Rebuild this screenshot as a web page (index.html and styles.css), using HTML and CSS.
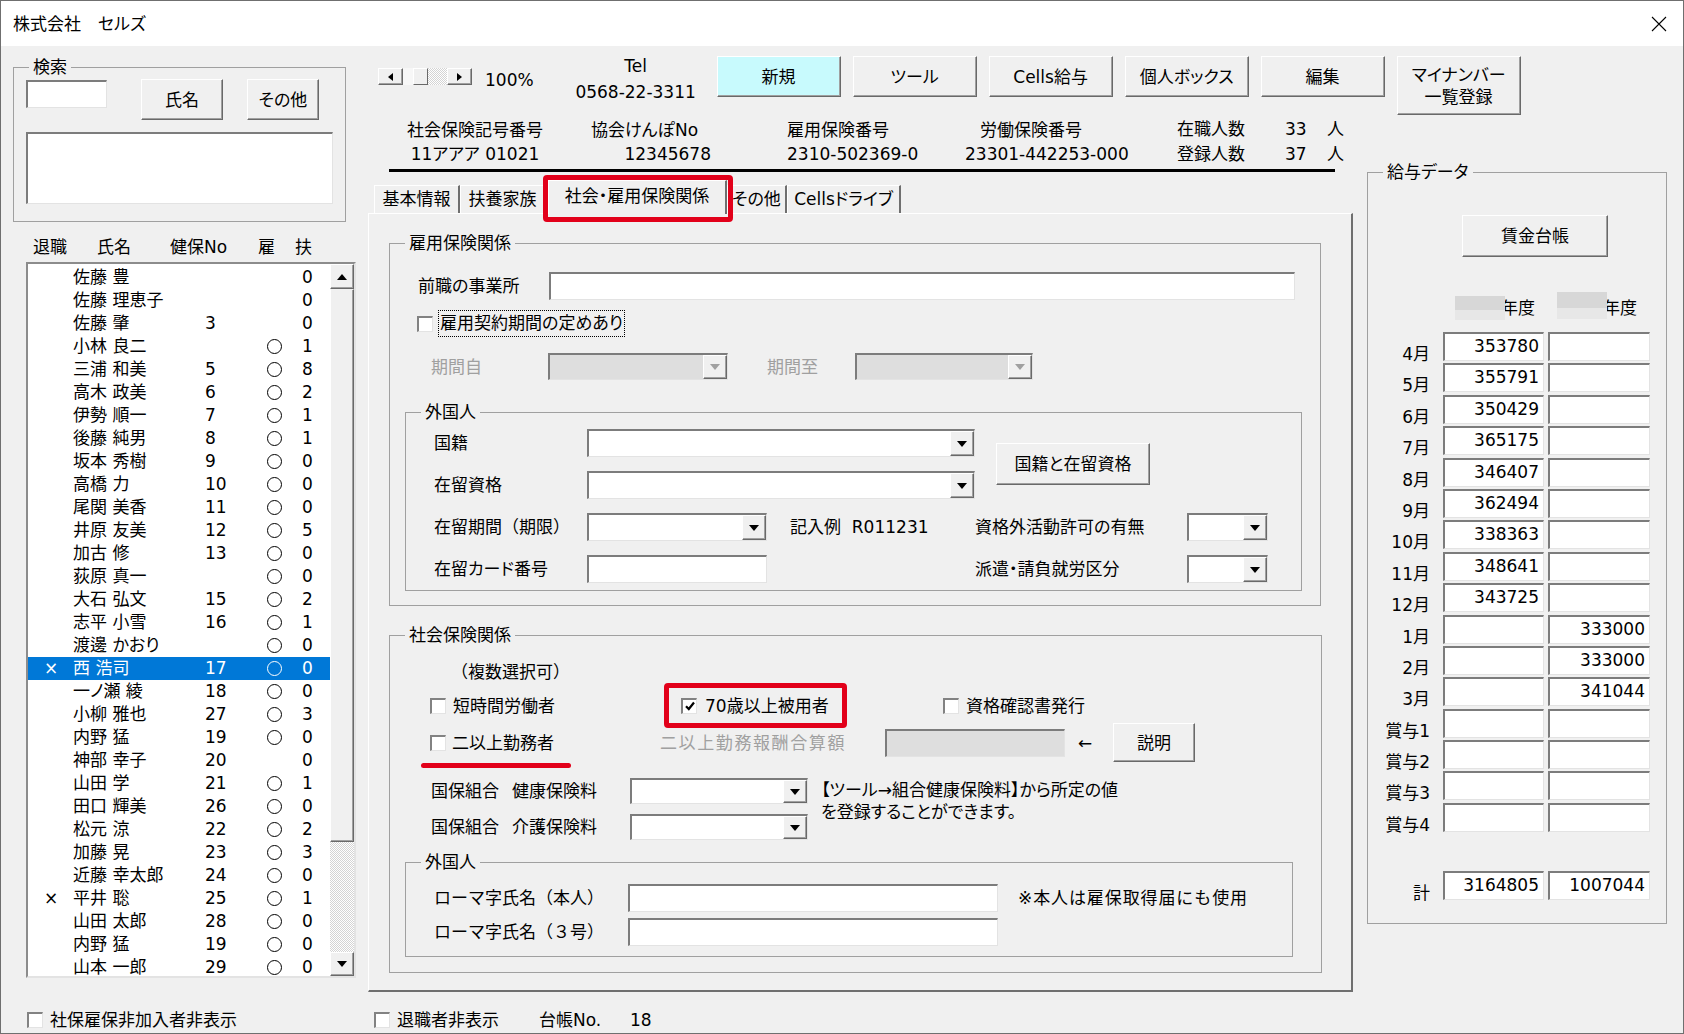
FILE: index.html
```html
<!DOCTYPE html>
<html lang="ja">
<head>
    <meta charset="UTF-8">
    <meta name="viewport" content="width=device-width, initial-scale=1.0">
    <title>株式会社　セルズ</title>
    <link rel="stylesheet" href="styles.css">
</head>
<body>
<div class="window">
    <div class="titlebar">
        <span class="title">株式会社　セルズ</span>
        <svg class="close" width="16" height="16" viewBox="0 0 16 16"><path d="M1 1L15 15M15 1L1 15" stroke="#000" stroke-width="1.1" fill="none"/></svg>
    </div>

    <div class="main">
        <!-- Left: search + employee list -->
        <div class="left">
            <div class="group search">
                <span class="legend">検索</span>
                <div class="search-row">
                    <div class="field search-input"></div>
                    <button class="btn btn-name">氏名</button>
                    <button class="btn btn-other">その他</button>
                </div>
                <div class="field search-list"></div>
            </div>

            <div class="list-head">
                <span class="h-ret">退職</span><span class="h-name">氏名</span><span class="h-no">健保No</span><span class="h-emp">雇</span><span>扶</span>
            </div>

            <div class="listbox">
                <div class="rows">
                    <div class="row"><span class="c-ret"></span><span>佐藤 豊</span><span></span><span class="c-emp"></span><span>0</span></div>
                    <div class="row"><span class="c-ret"></span><span>佐藤 理恵子</span><span></span><span class="c-emp"></span><span>0</span></div>
                    <div class="row"><span class="c-ret"></span><span>佐藤 肇</span><span>3</span><span class="c-emp"></span><span>0</span></div>
                    <div class="row"><span class="c-ret"></span><span>小林 良二</span><span></span><span class="c-emp"><i class="maru"></i></span><span>1</span></div>
                    <div class="row"><span class="c-ret"></span><span>三浦 和美</span><span>5</span><span class="c-emp"><i class="maru"></i></span><span>8</span></div>
                    <div class="row"><span class="c-ret"></span><span>高木 政美</span><span>6</span><span class="c-emp"><i class="maru"></i></span><span>2</span></div>
                    <div class="row"><span class="c-ret"></span><span>伊勢 順一</span><span>7</span><span class="c-emp"><i class="maru"></i></span><span>1</span></div>
                    <div class="row"><span class="c-ret"></span><span>後藤 純男</span><span>8</span><span class="c-emp"><i class="maru"></i></span><span>1</span></div>
                    <div class="row"><span class="c-ret"></span><span>坂本 秀樹</span><span>9</span><span class="c-emp"><i class="maru"></i></span><span>0</span></div>
                    <div class="row"><span class="c-ret"></span><span>高橋 力</span><span>10</span><span class="c-emp"><i class="maru"></i></span><span>0</span></div>
                    <div class="row"><span class="c-ret"></span><span>尾関 美香</span><span>11</span><span class="c-emp"><i class="maru"></i></span><span>0</span></div>
                    <div class="row"><span class="c-ret"></span><span>井原 友美</span><span>12</span><span class="c-emp"><i class="maru"></i></span><span>5</span></div>
                    <div class="row"><span class="c-ret"></span><span>加古 修</span><span>13</span><span class="c-emp"><i class="maru"></i></span><span>0</span></div>
                    <div class="row"><span class="c-ret"></span><span>荻原 真一</span><span></span><span class="c-emp"><i class="maru"></i></span><span>0</span></div>
                    <div class="row"><span class="c-ret"></span><span>大石 弘文</span><span>15</span><span class="c-emp"><i class="maru"></i></span><span>2</span></div>
                    <div class="row"><span class="c-ret"></span><span>志平 小雪</span><span>16</span><span class="c-emp"><i class="maru"></i></span><span>1</span></div>
                    <div class="row"><span class="c-ret"></span><span>渡邊 かおり</span><span></span><span class="c-emp"><i class="maru"></i></span><span>0</span></div>
                    <div class="row sel"><span class="c-ret">×</span><span>西 浩司</span><span>17</span><span class="c-emp"><i class="maru"></i></span><span>0</span></div>
                    <div class="row"><span class="c-ret"></span><span>一ノ瀬 綾</span><span>18</span><span class="c-emp"><i class="maru"></i></span><span>0</span></div>
                    <div class="row"><span class="c-ret"></span><span>小柳 雅也</span><span>27</span><span class="c-emp"><i class="maru"></i></span><span>3</span></div>
                    <div class="row"><span class="c-ret"></span><span>内野 猛</span><span>19</span><span class="c-emp"><i class="maru"></i></span><span>0</span></div>
                    <div class="row"><span class="c-ret"></span><span>神部 幸子</span><span>20</span><span class="c-emp"></span><span>0</span></div>
                    <div class="row"><span class="c-ret"></span><span>山田 学</span><span>21</span><span class="c-emp"><i class="maru"></i></span><span>1</span></div>
                    <div class="row"><span class="c-ret"></span><span>田口 輝美</span><span>26</span><span class="c-emp"><i class="maru"></i></span><span>0</span></div>
                    <div class="row"><span class="c-ret"></span><span>松元 涼</span><span>22</span><span class="c-emp"><i class="maru"></i></span><span>2</span></div>
                    <div class="row"><span class="c-ret"></span><span>加藤 晃</span><span>23</span><span class="c-emp"><i class="maru"></i></span><span>3</span></div>
                    <div class="row"><span class="c-ret"></span><span>近藤 幸太郎</span><span>24</span><span class="c-emp"><i class="maru"></i></span><span>0</span></div>
                    <div class="row"><span class="c-ret">×</span><span>平井 聡</span><span>25</span><span class="c-emp"><i class="maru"></i></span><span>1</span></div>
                    <div class="row"><span class="c-ret"></span><span>山田 太郎</span><span>28</span><span class="c-emp"><i class="maru"></i></span><span>0</span></div>
                    <div class="row"><span class="c-ret"></span><span>内野 猛</span><span>19</span><span class="c-emp"><i class="maru"></i></span><span>0</span></div>
                    <div class="row"><span class="c-ret"></span><span>山本 一郎</span><span>29</span><span class="c-emp"><i class="maru"></i></span><span>0</span></div>
                </div>
                <div class="vscroll">
                    <span class="sbtn sb-up"></span>
                    <span class="sb-thumb"></span>
                    <span class="dither sb-track"></span>
                    <span class="sbtn sb-down"></span>
                </div>
            </div>
        </div>

        <!-- Right: toolbar, tabs, salary data -->
        <div class="right">
            <div class="toolbar">
                <div class="hscroll">
                    <span class="sbtn sb-left"></span>
                    <span class="hs-gap"></span>
                    <span class="hs-thumb"></span>
                    <span class="dither hs-track"></span>
                    <span class="sbtn sb-right"></span>
                </div>
                <span class="zoom">100%</span>
                <div class="tel"><div>Tel</div><div>0568-22-3311</div></div>
                <button class="btn tbtn new">新規</button>
                <button class="btn tbtn">ツール</button>
                <button class="btn tbtn">Cells給与</button>
                <button class="btn tbtn">個人ボックス</button>
                <button class="btn tbtn">編集</button>
                <button class="btn tbtn tall">マイナンバー<br>一覧登録</button>
            </div>

            <div class="work">
                <div class="center">
                    <div class="info">
                        <div class="ic ic-a"><div>社会保険記号番号</div><div class="val">11アアア 01021</div></div>
                        <div class="ic ic-b"><div>協会けんぽNo</div><div class="val ar">12345678</div></div>
                        <div class="ic ic-c"><div>雇用保険番号</div><div class="val">2310-502369-0</div></div>
                        <div class="ic ic-d"><div class="pl">労働保険番号</div><div class="val">23301-442253-000</div></div>
                        <div class="count">
                            <span>在職人数</span><span>33</span><span class="nin">人</span>
                            <span>登録人数</span><span>37</span><span class="nin">人</span>
                        </div>
                    </div>
                    <div class="rule"></div>

                    <div class="tabs">
                        <div class="tab t1">基本情報</div>
                        <div class="tab t2">扶養家族</div>
                        <div class="tab sel">社会・雇用保険関係</div>
                        <div class="tab t4">その他</div>
                        <div class="tab t5">Cellsドライブ</div>
                    </div>

                    <div class="panel">
                        <!-- 雇用保険関係 -->
                        <div class="group emp">
                            <span class="legend">雇用保険関係</span>
                            <div class="row r1">
                                <span class="lbl-prev">前職の事業所</span>
                                <div class="field prev-input"></div>
                            </div>
                            <div class="row r2">
                                <span class="cb"></span>
                                <span class="focus">雇用契約期間の定めあり</span>
                            </div>
                            <div class="row r3">
                                <span class="dis lbl-from">期間自</span>
                                <div class="field off combo w180"><span class="drop"></span></div>
                                <span class="dis lbl-to">期間至</span>
                                <div class="field off combo w178"><span class="drop"></span></div>
                            </div>

                            <div class="group foreign1">
                                <span class="legend">外国人</span>
                                <div class="fgrid">
                                    <span class="g1">国籍</span>
                                    <div class="field combo g23"><span class="drop"></span></div>
                                    <button class="btn visa-btn">国籍と在留資格</button>

                                    <span class="g1">在留資格</span>
                                    <div class="field combo g23"><span class="drop"></span></div>

                                    <span class="g1 np">在留期間（期限）</span>
                                    <div class="field combo g2"><span class="drop"></span></div>
                                    <span class="g3 example">記入例 &nbsp;R011231</span>
                                    <span class="g4">資格外活動許可の有無</span>
                                    <div class="field combo g5"><span class="drop"></span></div>

                                    <span class="g1">在留カード番号</span>
                                    <div class="field g2"></div>
                                    <span class="g4">派遣・請負就労区分</span>
                                    <div class="field combo g5"><span class="drop"></span></div>
                                </div>
                            </div>
                        </div>

                        <!-- 社会保険関係 -->
                        <div class="group soc">
                            <span class="legend">社会保険関係</span>
                            <div class="multi np">（複数選択可）</div>
                            <div class="row rB">
                                <label class="chk short"><span class="cb"></span><span>短時間労働者</span></label>
                                <label class="chk redbox"><span class="cb on"><svg width="12" height="12" viewBox="0 0 12 12"><path d="M2 6.2L4.8 9L10 2.5" stroke="#000" stroke-width="2.2" fill="none"/></svg></span><span>70歳以上被用者</span></label>
                                <label class="chk cert"><span class="cb"></span><span>資格確認書発行</span></label>
                            </div>
                            <div class="row rC">
                                <label class="chk multi-job"><span class="cb"></span><span>二以上勤務者</span></label>
                                <span class="dis lbl-sum">二以上勤務報酬合算額</span>
                                <div class="field off sum-input"></div>
                                <span class="arrow">←</span>
                                <button class="btn help-btn">説明</button>
                            </div>
                            <div class="kokuho">
                                <span class="kl"><span>国保組合</span><span>健康保険料</span></span>
                                <div class="field combo"><span class="drop"></span></div>
                                <span class="knote">【ツール→組合健康保険料】から所定の値<br>を登録することができます。</span>
                                <span class="kl"><span>国保組合</span><span>介護保険料</span></span>
                                <div class="field combo"><span class="drop"></span></div>
                            </div>

                            <div class="group foreign2">
                                <span class="legend">外国人</span>
                                <div class="rr">
                                    <span class="rl np">ローマ字氏名（本人）</span>
                                    <div class="field roman"></div>
                                    <span class="rnote np">※本人は雇保取得届にも使用</span>
                                </div>
                                <div class="rr second">
                                    <span class="rl np">ローマ字氏名（３号）</span>
                                    <div class="field roman"></div>
                                </div>
                            </div>
                        </div>
                    </div>
                </div>

                <!-- 給与データ -->
                <div class="group pay">
                    <span class="legend">給与データ</span>
                    <button class="btn wage-btn">賃金台帳</button>
                    <div class="year-row">
                        <span></span>
                        <span class="yh y1"><i class="blur"></i>年度</span>
                        <span class="yh y2"><i class="blur"></i>年度</span>
                    </div>
                    <div class="pay-grid">
                        <span class="m">4月</span><div class="field amt">353780</div><div class="field amt"></div>
                        <span class="m">5月</span><div class="field amt">355791</div><div class="field amt"></div>
                        <span class="m">6月</span><div class="field amt">350429</div><div class="field amt"></div>
                        <span class="m">7月</span><div class="field amt">365175</div><div class="field amt"></div>
                        <span class="m">8月</span><div class="field amt">346407</div><div class="field amt"></div>
                        <span class="m">9月</span><div class="field amt">362494</div><div class="field amt"></div>
                        <span class="m">10月</span><div class="field amt">338363</div><div class="field amt"></div>
                        <span class="m">11月</span><div class="field amt">348641</div><div class="field amt"></div>
                        <span class="m">12月</span><div class="field amt">343725</div><div class="field amt"></div>
                        <span class="m">1月</span><div class="field amt"></div><div class="field amt">333000</div>
                        <span class="m">2月</span><div class="field amt"></div><div class="field amt">333000</div>
                        <span class="m">3月</span><div class="field amt"></div><div class="field amt">341044</div>
                        <span class="m">賞与1</span><div class="field amt"></div><div class="field amt"></div>
                        <span class="m">賞与2</span><div class="field amt"></div><div class="field amt"></div>
                        <span class="m">賞与3</span><div class="field amt"></div><div class="field amt"></div>
                        <span class="m">賞与4</span><div class="field amt"></div><div class="field amt"></div>
                    </div>
                    <div class="pay-grid total">
                        <span class="m">計</span><div class="field amt">3164805</div><div class="field amt">1007044</div>
                    </div>
                </div>
            </div>
        </div>
    </div>

    <div class="footer">
        <label class="chk f1"><span class="cb"></span><span>社保雇保非加入者非表示</span></label>
        <label class="chk f2"><span class="cb"></span><span>退職者非表示</span></label>
        <span class="ledger">台帳No.</span>
        <span>18</span>
    </div>
</div>
</body>
</html>
```

FILE: styles.css
```css
* {
    margin: 0;
    padding: 0;
    box-sizing: border-box;
}

body {
    font-family: "DejaVu Sans", "Noto Sans CJK JP", sans-serif;
    font-size: 17px;
    line-height: 22px;
    color: #000;
    background-color: #f0f0f0;
    font-feature-settings: "palt";
    overflow: hidden;
}

.np {
    font-feature-settings: normal;
}

.window {
    width: 1684px;
    height: 1034px;
    border: 1px solid #6f6f6f;
    overflow: hidden;
    display: flex;
    flex-direction: column;
}

.titlebar {
    height: 45px;
    flex: none;
    background-color: #fff;
    display: flex;
    align-items: center;
    justify-content: space-between;
    padding: 0 16px 0 12px;
}

.main {
    display: flex;
    height: 950px;
    flex: none;
}

.left {
    width: 355px;
    flex: none;
    padding-left: 12px;
}

.right {
    flex: 1;
    padding-left: 12px;
}

/* group boxes */
.group {
    position: relative;
    border: 1px solid #a0a0a0;
}

.legend {
    position: absolute;
    top: -12px;
    left: 15px;
    padding: 0 4px;
    background-color: #f0f0f0;
    line-height: 22px;
    white-space: nowrap;
}

/* basic controls */
.field {
    background-color: #fff;
    border-style: solid;
    border-width: 2px 1px 1px 2px;
    border-color: #7c7c7c #e3e3e3 #e3e3e3 #7c7c7c;
    height: 28px;
}

.field.off {
    background-color: #dedede;
}

.btn {
    font: inherit;
    color: #000;
    background-color: #f0f0f0;
    border: 1px solid;
    border-color: #fff #696969 #696969 #fff;
    box-shadow: inset -1px -1px 0 #a0a0a0;
    display: flex;
    align-items: center;
    justify-content: center;
    flex: none;
}

.combo {
    display: flex;
    justify-content: flex-end;
}

.drop,
.sbtn {
    background-color: #f0f0f0;
    border: 1px solid;
    border-color: #fff #696969 #696969 #fff;
    box-shadow: inset -1px -1px 0 #a0a0a0;
    display: flex;
    align-items: center;
    justify-content: center;
    flex: none;
}

.drop {
    width: 24px;
    height: 100%;
}

.drop::before,
.sb-down::before {
    content: "";
    border-left: 5px solid transparent;
    border-right: 5px solid transparent;
    border-top: 6px solid #000;
}

.sb-up::before {
    content: "";
    border-left: 5px solid transparent;
    border-right: 5px solid transparent;
    border-bottom: 6px solid #000;
}

.sb-left::before {
    content: "";
    border-top: 4px solid transparent;
    border-bottom: 4px solid transparent;
    border-right: 5px solid #000;
}

.sb-right::before {
    content: "";
    border-top: 4px solid transparent;
    border-bottom: 4px solid transparent;
    border-left: 5px solid #000;
}

.combo.off .drop::before {
    border-top-color: #a0a0a0;
}

.dither {
    background-image: repeating-conic-gradient(#fff 0 25%, #d4d4d4 0 50%);
    background-size: 2px 2px;
}

.cb {
    width: 16px;
    height: 16px;
    flex: none;
    background-color: #fff;
    border-style: solid;
    border-width: 2px 1px 1px 2px;
    border-color: #828282 #e3e3e3 #e3e3e3 #828282;
    display: flex;
    align-items: center;
    justify-content: center;
}

.chk {
    display: flex;
    align-items: center;
    gap: 7px;
    white-space: nowrap;
}

.dis {
    color: #a0a0a0;
}

.row {
    display: flex;
    align-items: center;
}

/* search */
.search {
    margin-top: 21px;
    width: 333px;
    height: 155px;
    padding: 11px 0 0 12px;
}

.search-row {
    display: flex;
    align-items: flex-start;
}

.search-input {
    width: 81px;
    margin-top: 1px;
}

.btn-name {
    width: 82px;
    height: 41px;
    margin-left: 34px;
}

.btn-other {
    width: 72px;
    height: 41px;
    margin-left: 24px;
}

.search-list {
    margin-top: 12px;
    width: 307px;
    height: 72px;
}

/* employee list */
.list-head {
    display: flex;
    margin-top: 14px;
    height: 22px;
    padding-left: 20px;
}

.h-ret { width: 64px; }
.h-name { width: 73px; }
.h-no { width: 88px; }
.h-emp { width: 37px; }

.listbox {
    margin: 4px 0 0 13px;
    width: 330px;
    height: 716px;
    display: flex;
    border-style: solid;
    border-width: 2px;
    border-color: #8c8c8c #e3e3e3 #e3e3e3 #8c8c8c;
    background-color: #fff;
}

.rows {
    flex: 1;
    overflow: hidden;
    padding-top: 2px;
}

.rows .row {
    display: grid;
    grid-template-columns: 45px 132px 62px 35px 1fr;
    height: 23px;
    line-height: 23px;
    white-space: nowrap;
}

.c-ret {
    padding-left: 16px;
}

.c-emp {
    display: flex;
    align-items: center;
}

.maru {
    display: block;
    width: 15px;
    height: 15px;
    border: 1px solid #000;
    border-radius: 50%;
}

.rows .sel {
    background-color: #0078d7;
    color: #fff;
}

.rows .sel .maru {
    border-color: #fff;
}

.vscroll {
    width: 24px;
    display: flex;
    flex-direction: column;
}

.sb-up { height: 25px; }
.sb-down { height: 24px; }

.sb-thumb {
    height: 553px;
    background-color: #f0f0f0;
    border: 1px solid;
    border-color: #f0f0f0 #696969 #696969 #fff;
    box-shadow: inset -1px -1px 0 #a0a0a0;
}

.sb-track {
    height: 110px;
}

/* toolbar */
.toolbar {
    display: flex;
    align-items: flex-start;
    height: 69px;
    padding-top: 10px;
}

.hscroll {
    display: flex;
    height: 17px;
    margin: 12px 0 0 10px;
}

.sb-left { width: 25px; }
.hs-gap { width: 10px; background-color: #f7f7f7; }
.hs-thumb {
    width: 15px;
    border: 1px solid;
    border-color: #fff #696969 #696969 #fff;
    background-color: #f0f0f0;
}
.hs-track { width: 19px; }
.sb-right { width: 25px; }

.zoom {
    margin: 13px 0 0 13px;
}

.tel {
    width: 126px;
    margin: -3px 0 0 39px;
    text-align: center;
    line-height: 26px;
}

.tbtn {
    width: 124px;
    height: 41px;
    margin-left: 12px;
}

.tbtn.new {
    margin-left: 18px;
    background-color: #c8fafd;
}

.tbtn.tall {
    height: 59px;
    line-height: 22px;
}

/* work area */
.work {
    display: flex;
}

.center {
    width: 985px;
    flex: none;
}

.info {
    display: flex;
    height: 54px;
    padding-top: 4px;
    white-space: nowrap;
}

.ic .val { margin-top: 2px; }
.ic-a { margin-left: 21px; width: 172px; text-align: center; }
.ic-b { margin-left: 30px; width: 120px; }
.ic-c { margin-left: 76px; width: 150px; }
.ic-d { margin-left: 28px; width: 170px; }
.ar { text-align: right; }
.pl { padding-left: 15px; }

.count {
    margin-left: 42px;
    display: grid;
    grid-template-columns: 108px 30px 30px;
    line-height: 21px;
}

.nin { padding-left: 12px; }

.rule {
    margin-left: 21px;
    width: 946px;
    height: 3px;
    background-color: #000;
}

/* tabs */
.tabs {
    display: flex;
    align-items: flex-end;
    height: 41px;
    padding-left: 6px;
    position: relative;
    z-index: 1;
}

.tab {
    height: 28px;
    line-height: 26px;
    text-align: center;
    white-space: nowrap;
    border-top: 1px solid #fff;
    border-left: 1px solid #fff;
    border-right: 2px solid #6f6f6f;
    flex: none;
}

.t1 { width: 86px; }
.t2 { width: 86px; }
.t4 { width: 60px; }
.t5 { width: 114px; }

.tab.sel {
    width: 179px;
    height: 34px;
    line-height: 30px;
    margin: 0 0 -1px 2px;
    position: relative;
    background-color: #f0f0f0;
}

.tab.sel::after {
    content: "";
    position: absolute;
    left: -6px;
    right: -8px;
    top: -6px;
    bottom: -8px;
    border: 5px solid #e2001a;
    border-radius: 4px;
}

.panel {
    height: 779px;
    border-style: solid;
    border-width: 1px 2px 2px 1px;
    border-color: #fff #6f6f6f #6f6f6f #fff;
    padding: 29px 0 0 20px;
}

/* employment insurance */
.emp {
    width: 932px;
    height: 363px;
    padding: 28px 0 0 28px;
}

.r1 { height: 28px; }
.lbl-prev { width: 131px; }
.prev-input { width: 746px; }

.r2 {
    height: 27px;
    margin: 10px 0 0 -1px;
    gap: 5px;
}

.focus {
    border: 1px dotted #000;
    padding: 0 1px;
    line-height: 25px;
}

.r3 {
    height: 27px;
    margin-top: 16px;
}

.lbl-from { margin-left: 13px; width: 117px; }
.lbl-to { margin-left: 39px; width: 88px; }
.w180 { width: 180px; height: 27px; }
.w178 { width: 178px; height: 27px; }

.foreign1 {
    width: 897px;
    height: 179px;
    margin: 32px 0 0 -13px;
    padding: 16px 0 0 28px;
}

.fgrid {
    display: grid;
    grid-template-columns: 153px 180px 208px 212px 81px;
    grid-auto-rows: 28px;
    row-gap: 14px;
    align-items: center;
    white-space: nowrap;
}

.fgrid .field {
    height: 28px;
}

.g1 { grid-column: 1; }
.g2 { grid-column: 2; }
.g23 { grid-column: 2 / 4; }
.g3 { grid-column: 3; }
.g4 { grid-column: 4; }
.g5 { grid-column: 5; }

.visa-btn {
    grid-column: 4;
    grid-row: 1 / 3;
    width: 154px;
    height: 42px;
    margin-left: 21px;
}

.example {
    padding-left: 23px;
}

/* social insurance */
.soc {
    width: 933px;
    height: 338px;
    margin-top: 29px;
    padding: 25px 0 0 40px;
}

.multi {
    margin-left: 21px;
}

.rB { height: 45px; }

.short { width: 234px; }

.redbox {
    width: 183px;
    height: 45px;
    border: 5px solid #e2001a;
    border-radius: 4px;
    padding-left: 12px;
    gap: 8px;
}

.cert { margin-left: 96px; }

.rC {
    height: 39px;
    margin-top: -5px;
}

.multi-job {
    width: 230px;
    position: relative;
    gap: 6px;
}

.multi-job::after {
    content: "";
    position: absolute;
    left: -9px;
    width: 150px;
    top: 31px;
    height: 5px;
    border-radius: 3px;
    background-color: #e2001a;
}

.lbl-sum {
    width: 225px;
    white-space: nowrap;
    letter-spacing: 1.6px;
}

.sum-input { width: 180px; }
.arrow { margin-left: 13px; width: 17px; }

.help-btn {
    width: 82px;
    height: 39px;
    margin-left: 18px;
}

.kokuho {
    display: grid;
    grid-template-columns: 200px 178px auto;
    grid-template-rows: 26px 26px;
    row-gap: 10px;
    margin-top: 16px;
    align-items: center;
}

.kokuho .field { height: 26px; }

.kl {
    display: flex;
    gap: 13px;
    margin-left: 1px;
    white-space: nowrap;
}

.knote {
    grid-column: 3;
    grid-row: 1 / 3;
    align-self: start;
    padding-left: 13px;
    margin-top: 1px;
    white-space: nowrap;
}

.foreign2 {
    width: 888px;
    height: 95px;
    margin: 22px 0 0 -25px;
    padding: 21px 0 0 28px;
}

.rr {
    display: flex;
    align-items: center;
    height: 28px;
    white-space: nowrap;
}

.rr.second { margin-top: 6px; }
.rl { width: 194px; }
.roman { width: 370px; }

.rnote {
    margin-left: 20px;
    letter-spacing: 0.9px;
}

/* salary data */
.pay {
    width: 300px;
    height: 752px;
    margin: 57px 0 0 14px;
    padding-top: 42px;
    flex: none;
}

.wage-btn {
    width: 146px;
    height: 42px;
    margin-left: 94px;
}

.year-row,
.pay-grid {
    display: grid;
    grid-template-columns: 71px 101px 102px;
    column-gap: 4px;
}

.year-row {
    margin-top: 36px;
    height: 30px;
    align-items: center;
}

.yh {
    display: flex;
    align-items: center;
    white-space: nowrap;
}

.y1 { padding-left: 12px; }
.y2 { padding-left: 9px; }

.blur {
    display: block;
    width: 50px;
    height: 24px;
    margin-right: -4px;
    position: relative;
    z-index: 1;
    background: linear-gradient(#d7d7d7 0 58%, #e7e7e7 58%);
}

.y2 .blur {
    margin-top: -6px;
    height: 27px;
}

.pay-grid {
    margin-top: 9px;
    grid-auto-rows: 29px;
    row-gap: 2.4px;
}

.pay-grid.total {
    margin-top: 39px;
}

.pay-grid .field {
    height: auto;
}

.m {
    text-align: right;
    padding-right: 9px;
    align-self: end;
    margin-bottom: -4px;
    white-space: nowrap;
}

.amt {
    text-align: right;
    padding-right: 4px;
    line-height: 25px;
}

/* footer */
.footer {
    display: flex;
    align-items: center;
    height: 16px;
    margin-top: 16px;
}

.f1 { margin-left: 26px; width: 347px; }
.f2 { width: 165px; }
.ledger { width: 91px; }
```
